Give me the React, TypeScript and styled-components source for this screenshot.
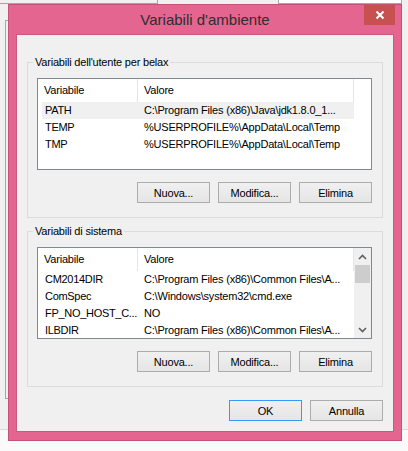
import React from "react";
import styled, { createGlobalStyle } from "styled-components";

type EnvVar = { name: string; value: string; highlighted?: boolean };

const userVars: EnvVar[] = [
  { name: "PATH", value: "C:\\Program Files (x86)\\Java\\jdk1.8.0_1...", highlighted: true },
  { name: "TEMP", value: "%USERPROFILE%\\AppData\\Local\\Temp" },
  { name: "TMP", value: "%USERPROFILE%\\AppData\\Local\\Temp" },
];

const systemVars: EnvVar[] = [
  { name: "CM2014DIR", value: "C:\\Program Files (x86)\\Common Files\\A..." },
  { name: "ComSpec", value: "C:\\Windows\\system32\\cmd.exe" },
  { name: "FP_NO_HOST_C...", value: "NO" },
  { name: "ILBDIR", value: "C:\\Program Files (x86)\\Common Files\\A..." },
];

const GlobalStyle = createGlobalStyle`
  html, body {
    margin: 0;
    padding: 0;
  }
  body {
    width: 408px;
    height: 451px;
    overflow: hidden;
    font-family: "Liberation Sans", Arial, sans-serif;
    background: #f0f0f0;
  }
  * {
    box-sizing: border-box;
  }
`;

const EnvVarList: React.FC<{ items: EnvVar[]; scrollable?: boolean }> = ({ items, scrollable }) => (
  <List>
    <ListBody>
      <Header>
        <HeaderCell>Variabile</HeaderCell>
        <HeaderCell>Valore</HeaderCell>
      </Header>
      {items.map((item) => (
        <Row key={item.name} $highlighted={item.highlighted}>
          <NameCell>{item.name}</NameCell>
          <ValueCell>{item.value}</ValueCell>
        </Row>
      ))}
    </ListBody>
    {scrollable && (
      <Scrollbar>
        <ScrollArrow>
          <svg width="9" height="6" viewBox="0 0 9 6">
            <path d="M1 5 L4.5 1.5 L8 5" fill="none" stroke="#606060" strokeWidth="1.6" />
          </svg>
        </ScrollArrow>
        <Track>
          <Thumb />
        </Track>
        <ScrollArrow>
          <svg width="9" height="6" viewBox="0 0 9 6">
            <path d="M1 1 L4.5 4.5 L8 1" fill="none" stroke="#606060" strokeWidth="1.6" />
          </svg>
        </ScrollArrow>
      </Scrollbar>
    )}
  </List>
);

const ActionButtons = () => (
  <ButtonRow>
    <Button>Nuova...</Button>
    <Button>Modifica...</Button>
    <Button>Elimina</Button>
  </ButtonRow>
);

const App = () => {
  return (
    <Desktop>
      <GlobalStyle />
      <TopWindow />
      <TopRightWindow />
      <SideWindow />
      <BottomStrip />
      <Dialog>
        <TitleBar>
          <span />
          <Title>Variabili d'ambiente</Title>
          <CloseButton>
            <svg width="10" height="10" viewBox="0 0 10 10">
              <path d="M1.5 1.5 L8.5 8.5 M8.5 1.5 L1.5 8.5" stroke="#fff" strokeWidth="2" />
            </svg>
          </CloseButton>
        </TitleBar>
        <Client>
          <Group>
            <Legend>Variabili dell'utente per belax</Legend>
            <EnvVarList items={userVars} />
            <ActionButtons />
          </Group>
          <Group>
            <Legend>Variabili di sistema</Legend>
            <EnvVarList items={systemVars} scrollable />
            <ActionButtons />
          </Group>
          <Footer>
            <Button $default>OK</Button>
            <Button>Annulla</Button>
          </Footer>
        </Client>
      </Dialog>
    </Desktop>
  );
};

export default App;

const Desktop = styled.div`
  position: relative;
  width: 408px;
  height: 451px;
  overflow: hidden;
  background: #f0f0f0;
`;

const TopWindow = styled.div`
  position: absolute;
  left: -10px;
  top: -20px;
  width: 168px;
  height: 24px;
  border: 1px solid #a5a5a5;
  background: #f0f0f0;
`;

const TopRightWindow = styled.div`
  position: absolute;
  left: 278px;
  top: -10px;
  width: 124px;
  height: 14px;
  border: 1px solid #a5a5a5;
  background: #fff;
`;

const SideWindow = styled.div`
  position: absolute;
  left: 5px;
  top: 20px;
  width: 260px;
  height: 379px;
  border: 1px solid #a5a5a5;
  background: #f0f0f0;
`;

const BottomStrip = styled.div`
  position: absolute;
  left: 0;
  right: 0;
  top: 429px;
  bottom: 0;
  border-top: 1px solid #d9d9d9;
  background: #fafafa;
`;

const Dialog = styled.div`
  position: absolute;
  left: 8px;
  top: 4px;
  width: 394px;
  height: 437px;
  display: flex;
  flex-direction: column;
  padding: 0 7px 8px;
  background: #e4658f;
  border: 1px solid #c5507a;
`;

const TitleBar = styled.div`
  display: grid;
  grid-template-columns: 1fr auto 1fr;
  height: 29px;
  margin: 0 -7px;
`;

const Title = styled.div`
  font-size: 15px;
  line-height: 30px;
  color: #2e2e2e;
  white-space: nowrap;
`;

const CloseButton = styled.div`
  justify-self: end;
  align-self: start;
  width: 31px;
  height: 20px;
  margin-right: 6px;
  display: flex;
  align-items: center;
  justify-content: center;
  background: #c75050;
`;

const Client = styled.div`
  flex: 1;
  display: flex;
  flex-direction: column;
  padding: 19px 10px 10px;
  background: #f0f0f0;
  border: 1px solid #c65a80;
  font-size: 11px;
  letter-spacing: -0.2px;
  color: #000;
`;

const Group = styled.fieldset`
  margin: 0;
  padding: 8px 10px 14px 9px;
  min-width: 0;
  border: 1px solid #dcdcdc;

  & + & {
    margin-top: 5px;
  }
`;

const Legend = styled.legend`
  margin-left: -4px;
  padding: 0 2px;
  line-height: 16px;
  font-size: 11px;
`;

const List = styled.div`
  display: flex;
  height: 92px;
  background: #fff;
  border: 1px solid #828790;
  overflow: hidden;
`;

const ListBody = styled.div`
  flex: 1;
  min-width: 0;
  display: flex;
  flex-direction: column;
`;

const Header = styled.div`
  display: grid;
  grid-template-columns: 100px 216px;
  height: 23px;
`;

const HeaderCell = styled.div`
  padding-left: 6px;
  line-height: 23px;
  border-right: 1px solid #e5e5e5;
`;

const Row = styled.div<{ $highlighted?: boolean }>`
  display: grid;
  grid-template-columns: 95px 217px;
  height: 17px;
  margin-left: 4px;
  width: 312px;
  background: ${(p) => (p.$highlighted ? "#f0f0f0" : "transparent")};
`;

const NameCell = styled.div`
  padding-left: 3px;
  line-height: 17px;
  white-space: nowrap;
  letter-spacing: -0.3px;
`;

const ValueCell = styled.div`
  padding-left: 7px;
  line-height: 17px;
  white-space: nowrap;
  overflow: hidden;
`;

const Scrollbar = styled.div`
  width: 17px;
  display: flex;
  flex-direction: column;
  background: #f0f0f0;
`;

const ScrollArrow = styled.div`
  height: 17px;
  display: flex;
  align-items: center;
  justify-content: center;
`;

const Track = styled.div`
  flex: 1;
  padding: 0 1px;
`;

const Thumb = styled.div`
  height: 18px;
  background: #cdcdcd;
`;

const ButtonRow = styled.div`
  display: flex;
  justify-content: flex-end;
  gap: 8px;
  margin-top: 12px;
`;

const Footer = styled.div`
  display: flex;
  justify-content: flex-end;
  gap: 8px;
  margin-top: 13px;
`;

const Button = styled.button<{ $default?: boolean }>`
  width: 73px;
  height: 21px;
  padding: 0;
  font-family: inherit;
  font-size: 11px;
  letter-spacing: -0.2px;
  color: #000;
  background: linear-gradient(#f0f0f0, #e5e5e5);
  border: 1px solid ${(p) => (p.$default ? "#3399ff" : "#acacac")};
  border-radius: 0;
`;
